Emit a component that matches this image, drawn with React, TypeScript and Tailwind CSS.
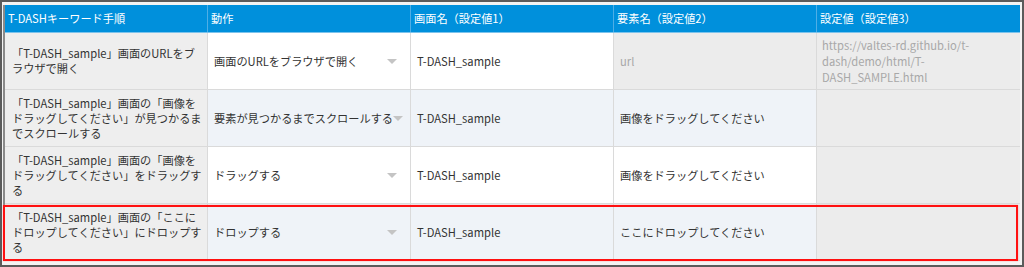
import React from "react";

const font = { fontFamily: '"Noto Sans CJK JP", "Noto Sans", sans-serif' };

type Row = {
  step: string[];
  action: string;
  screen: string;
  element: string;
  elementDisabled?: boolean;
  value: string[];
  alt: boolean;
};

const rows: Row[] = [
  {
    step: ["「T-DASH_sample」画面のURLをブ", "ラウザで開く"],
    action: "画面のURLをブラウザで開く",
    screen: "T-DASH_sample",
    element: "url",
    elementDisabled: true,
    value: ["https://valtes-rd.github.io/t-", "dash/demo/html/T-", "DASH_SAMPLE.html"],
    alt: false,
  },
  {
    step: ["「T-DASH_sample」画面の「画像を", "ドラッグしてください」が見つかるま", "でスクロールする"],
    action: "要素が見つかるまでスクロールする",
    screen: "T-DASH_sample",
    element: "画像をドラッグしてください",
    value: [],
    alt: true,
  },
  {
    step: ["「T-DASH_sample」画面の「画像を", "ドラッグしてください」をドラッグす", "る"],
    action: "ドラッグする",
    screen: "T-DASH_sample",
    element: "画像をドラッグしてください",
    value: [],
    alt: false,
  },
  {
    step: ["「T-DASH_sample」画面の「ここに", "ドロップしてください」にドロップす", "る"],
    action: "ドロップする",
    screen: "T-DASH_sample",
    element: "ここにドロップしてください",
    value: [],
    alt: true,
  },
];

const headers = ["T-DASHキーワード手順", "動作", "画面名（設定値1）", "要素名（設定値2）", "設定値（設定値3）"];

export default function App() {
  return (
    <div className="w-[1024px] h-[267px] overflow-hidden bg-white" style={font}>
      <div className="w-full h-full border-2 border-[#5b5b5b] bg-[#f3f3f3] pt-[3px] pl-[1px] pr-[2px] pb-[4px] flex flex-col">
        <div className="flex-1 border-l-2 border-[#8a8a8a] flex flex-col">
          {/* header */}
          <div className="grid grid-cols-5 h-[28px] bg-[#0090dc] border-b border-[#7cc3ec] text-white text-[11.2px] leading-[15px]">
            {headers.map((h, i) => (
              <div
                key={i}
                className={`flex items-center pl-[3px] whitespace-nowrap ${i < 4 ? "border-r border-[#4eaee6]" : ""}`}
              >
                {h}
              </div>
            ))}
          </div>
          {rows.map((r, idx) => {
            const rowBg = r.alt ? "bg-[#eff3f8]" : "bg-white";
            const last = idx === rows.length - 1;
            return (
              <div
                key={idx}
                className="relative grid grid-cols-5 h-[57px] border-b border-[#dadada] text-[11.2px] leading-[15px] text-[#333333]"
              >
                <div className="bg-[#eeeeee] border-r border-[#dadada] flex flex-col justify-center pl-[7px] whitespace-nowrap overflow-hidden">
                  {r.step.map((l, i) => (
                    <span key={i}>{l}</span>
                  ))}
                </div>
                <div className={`${rowBg} border-r border-[#dadada] flex items-center justify-between pl-[6px] pr-[13px] whitespace-nowrap`}>
                  <span>{r.action}</span>
                  <span className="w-0 h-0 border-l-[5px] border-r-[5px] border-t-[5px] border-l-transparent border-r-transparent border-t-[#c4c4c4] shrink-0" />
                </div>
                <div className={`${rowBg} border-r border-[#dadada] flex items-center pl-[6px] whitespace-nowrap`}>
                  {r.screen}
                </div>
                <div
                  className={`${r.elementDisabled ? "bg-[#ececec] text-[#a8a8a8]" : rowBg} border-r border-[#dadada] flex items-center pl-[6px] whitespace-nowrap`}
                >
                  {r.element}
                </div>
                <div className="bg-[#ececec] flex flex-col justify-center pl-[5px] text-[#a8a8a8] leading-[16px] whitespace-nowrap">
                  {r.value.map((l, i) => (
                    <span key={i}>{l}</span>
                  ))}
                </div>
                {last && (
                  <div className="absolute top-[1px] -bottom-[1px] -left-[2px] right-[2px] border-2 border-[#ff1010] shadow-[0_0_1px_#ff8080] pointer-events-none" />
                )}
              </div>
            );
          })}
        </div>
      </div>
    </div>
  );
}
